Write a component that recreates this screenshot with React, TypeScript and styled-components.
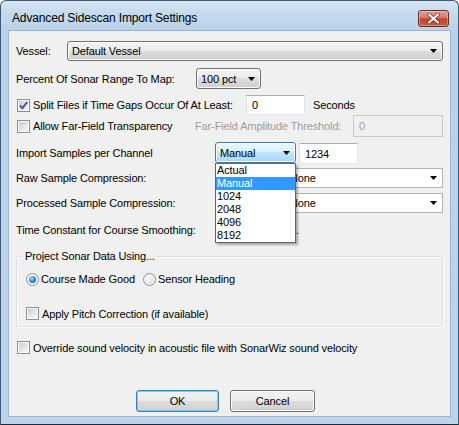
import styled, { createGlobalStyle, css } from 'styled-components'

const UI_FONT = `"Liberation Sans", Arial, sans-serif`

const GlobalStyle = createGlobalStyle`
  html, body {
    margin: 0;
    padding: 0;
    background: #ffffff;
  }
  * {
    box-sizing: border-box;
  }
`

const Window = styled.div`
  width: 459px;
  height: 425px;
  border: 1px solid #3f5873;
  border-bottom-color: #1d2b38;
  border-radius: 6px 6px 0 0;
  background: linear-gradient(180deg, #d6e5f4 0px, #c4d9ee 14px, #b9d1ea 30px, #bcd4ec 100%);
  padding: 0 7px 7px;
  display: flex;
  flex-direction: column;
  font-family: ${UI_FONT};
  font-size: 11px;
  letter-spacing: -0.13px;
  color: #000;
`

const TitleBar = styled.div`
  height: 29px;
  display: flex;
  align-items: flex-start;
  flex-shrink: 0;
`

const Title = styled.div`
  margin: 10px 0 0 4px;
  font-size: 12px;
  line-height: 15px;
  letter-spacing: -0.15px;
  white-space: nowrap;
`

const CloseButton = styled.div`
  margin: 9px 2px 0 auto;
  width: 31px;
  height: 17px;
  border: 1px solid #6b2a22;
  border-radius: 3px;
  background: linear-gradient(180deg, #e6a094 0%, #d4796a 45%, #c2432e 52%, #cb5a44 100%);
  box-shadow: inset 0 0 0 1px rgba(255, 255, 255, 0.3);
  display: flex;
  align-items: center;
  justify-content: center;
`

const Client = styled.div`
  flex: 1;
  background: #f0f0f0;
  border: 1px solid #9fb3cb;
  padding: 10px 7px 0;
  display: flex;
  flex-direction: column;
`

interface IRowProps {
  $top?: number
  $h: number
}

const Row = styled.div<IRowProps>`
  position: relative;
  display: flex;
  align-items: center;
  flex-shrink: 0;
  height: ${(p) => p.$h}px;
  margin-top: ${(p) => p.$top ?? 0}px;
`

interface ILabelProps {
  $w?: number
  $ml?: number
  $disabled?: boolean
}

const Label = styled.span<ILabelProps>`
  flex-shrink: 0;
  white-space: nowrap;
  width: ${(p) => (p.$w ? `${p.$w}px` : 'auto')};
  margin-left: ${(p) => p.$ml ?? 0}px;
  color: ${(p) => (p.$disabled ? '#9c9c9c' : '#000')};
`

const CheckBox = styled.span<{ $ml?: number }>`
  flex-shrink: 0;
  width: 13px;
  height: 13px;
  margin-left: ${(p) => p.$ml ?? 1}px;
  margin-right: 3px;
  border: 1px solid #8e8f8f;
  background: linear-gradient(135deg, #c2c6cc 0%, #e6e7e9 55%, #f8f8f8 100%);
  box-shadow: inset 0 0 0 1px #fbfbfb;
  display: inline-flex;
  align-items: center;
  justify-content: center;
`

const Radio = styled.span`
  flex-shrink: 0;
  width: 13px;
  height: 13px;
  margin-right: 2px;
  border-radius: 50%;
  border: 1px solid #8e8f8f;
  background: radial-gradient(circle at 35% 35%, #f8f8f8 0%, #e4e4e4 60%, #c9ccd1 100%);
  box-shadow: inset 0 0 0 1px #fbfbfb;
  display: inline-flex;
  align-items: center;
  justify-content: center;
`

const RadioDot = styled.span`
  width: 7px;
  height: 7px;
  border-radius: 50%;
  background: radial-gradient(circle at 40% 35%, #a9e2fc 0%, #3d8fd4 45%, #0f4f93 100%);
`

const RadioItem = styled.span<{ $w?: number }>`
  display: flex;
  align-items: center;
  width: ${(p) => (p.$w ? `${p.$w}px` : 'auto')};
  flex-shrink: 0;
  white-space: nowrap;
`

const comboVariants = {
  button: css`
    border: 1px solid #707070;
    border-radius: 3px;
    background: linear-gradient(180deg, #f2f2f2 0%, #ebebeb 50%, #dddddd 50%, #cfcfcf 100%);
    box-shadow: inset 0 0 0 1px #fbfbfb;
  `,
  focus: css`
    border: 1px solid #3c7fb1;
    border-radius: 3px;
    background: linear-gradient(180deg, #eaf6fd 0%, #d9f0fc 50%, #bee6fd 50%, #a7d9f5 100%);
    box-shadow: inset 0 0 0 1px #f4fbff;
  `,
  flat: css`
    border: 1px solid #b3b3b3;
    background: #ffffff;
  `,
}

interface IComboProps {
  $w: number
  $h: number
  $ml?: number
  $variant: keyof typeof comboVariants
}

const Combo = styled.div<IComboProps>`
  flex-shrink: 0;
  width: ${(p) => p.$w}px;
  height: ${(p) => p.$h}px;
  margin-left: ${(p) => p.$ml ?? 0}px;
  padding: 0 5px 0 4px;
  display: flex;
  align-items: center;
  justify-content: space-between;
  white-space: nowrap;
  align-self: flex-start;
  ${(p) => comboVariants[p.$variant]}
`

interface ITextBoxProps {
  $w: number
  $h: number
  $ml?: number
  $disabled?: boolean
}

const TextBox = styled.div<ITextBoxProps>`
  flex-shrink: 0;
  width: ${(p) => p.$w}px;
  height: ${(p) => p.$h}px;
  margin-left: ${(p) => p.$ml ?? 0}px;
  padding-left: 5px;
  display: flex;
  align-items: center;
  align-self: flex-end;
  border: 1px solid;
  border-color: ${(p) => (p.$disabled ? '#c5c8cc' : '#abadb3 #e2e3ea #e3e9ef #dbdfe6')};
  background: ${(p) => (p.$disabled ? '#f0f0f0' : '#ffffff')};
  color: ${(p) => (p.$disabled ? '#9c9c9c' : '#000')};
`

const DropList = styled.div`
  position: absolute;
  top: 21px;
  left: 199px;
  width: 81px;
  height: 80px;
  z-index: 10;
  border: 1px solid #646464;
  background: #ffffff;
  box-shadow: 2px 2px 2px rgba(0, 0, 0, 0.3);
  display: flex;
  flex-direction: column;
`

const DropItem = styled.div<{ $selected?: boolean }>`
  height: 13px;
  line-height: 13px;
  padding-left: 1px;
  background: ${(p) => (p.$selected ? '#3399ff' : 'transparent')};
  color: ${(p) => (p.$selected ? '#ffffff' : '#000')};
`

const Group = styled.div`
  position: relative;
  flex-shrink: 0;
  margin-top: 16px;
  height: 71px;
  border: 1px solid #d5dfe5;
  border-radius: 3px;
  box-shadow: 1px 1px 0 #ffffff, inset 1px 1px 0 #ffffff;
  padding-left: 9px;
  display: flex;
  flex-direction: column;
`

const Legend = styled.span`
  position: absolute;
  top: -7px;
  left: 6px;
  padding: 0 2px;
  line-height: 13px;
  background: #f0f0f0;
  white-space: nowrap;
`

const ButtonBar = styled.div`
  display: flex;
  flex-shrink: 0;
  margin-top: 36px;
  height: 22px;
`

const Button = styled.div<{ $w: number; $ml: number; $default?: boolean }>`
  width: ${(p) => p.$w}px;
  height: 22px;
  margin-left: ${(p) => p.$ml}px;
  border: 1px solid ${(p) => (p.$default ? '#3c7fb1' : '#707070')};
  border-radius: 3px;
  background: linear-gradient(180deg, #f2f2f2 0%, #ebebeb 50%, #dddddd 50%, #cfcfcf 100%);
  box-shadow: inset 0 0 0 1px ${(p) => (p.$default ? '#6fd3f7' : '#fbfbfb')};
  display: flex;
  align-items: center;
  justify-content: center;
`

const Arrow = () => (
  <svg width="7" height="4" viewBox="0 0 7 4">
    <polygon points="0,0 7,0 3.5,4" fill="#000" />
  </svg>
)

const Check = () => (
  <svg width="11" height="11" viewBox="0 0 11 11">
    <path d="M2 5.4 L4.4 8.2 L9.2 2.2" fill="none" stroke="#3b5a9c" strokeWidth="1.9" />
  </svg>
)

const CloseGlyph = () => (
  <svg width="13" height="11" viewBox="0 0 13 11">
    <path d="M2 1.5 L11 9.5 M11 1.5 L2 9.5" stroke="#6b2a22" strokeWidth="3.6" strokeLinecap="round" />
    <path d="M2 1.5 L11 9.5 M11 1.5 L2 9.5" stroke="#ffffff" strokeWidth="2.2" strokeLinecap="round" />
  </svg>
)

const sampleOptions = ['Actual', 'Manual', '1024', '2048', '4096', '8192']

function App() {
  return (
    <>
      <GlobalStyle />
      <Window>
        <TitleBar>
          <Title>Advanced Sidescan Import Settings</Title>
          <CloseButton>
            <CloseGlyph />
          </CloseButton>
        </TitleBar>
        <Client>
          <Row $h={20}>
            <Label $w={51}>Vessel:</Label>
            <Combo $variant="button" $w={376} $h={20}>
              Default Vessel
              <Arrow />
            </Combo>
          </Row>
          <Row $top={7} $h={21}>
            <Label $w={180}>Percent Of Sonar Range To Map:</Label>
            <Combo $variant="button" $w={65} $h={21}>
              100 pct
              <Arrow />
            </Combo>
          </Row>
          <Row $top={6} $h={20}>
            <CheckBox>
              <Check />
            </CheckBox>
            <Label $w={213}>Split Files if Time Gaps Occur Of At Least:</Label>
            <TextBox $w={59} $h={20}>0</TextBox>
            <Label $ml={8}>Seconds</Label>
          </Row>
          <Row $h={22}>
            <CheckBox />
            <Label $w={162}>Allow Far-Field Transparency</Label>
            <Label $w={158} $disabled>
              Far-Field Amplitude Threshold:
            </Label>
            <TextBox $w={90} $h={22} $disabled>
              0
            </TextBox>
          </Row>
          <Row $top={5} $h={22}>
            <Label $w={199}>Import Samples per Channel</Label>
            <Combo $variant="focus" $w={81} $h={21}>
              Manual
              <Arrow />
            </Combo>
            <TextBox $w={59} $h={21} $ml={3}>
              1234
            </TextBox>
            <DropList>
              {sampleOptions.map((opt) => (
                <DropItem key={opt} $selected={opt === 'Manual'}>
                  {opt}
                </DropItem>
              ))}
            </DropList>
          </Row>
          <Row $top={4} $h={20}>
            <Label $w={269}>Raw Sample Compression:</Label>
            <Combo $variant="flat" $w={158} $h={20}>
              None
              <Arrow />
            </Combo>
          </Row>
          <Row $top={5} $h={20}>
            <Label $w={269}>Processed Sample Compression:</Label>
            <Combo $variant="flat" $w={158} $h={20}>
              None
              <Arrow />
            </Combo>
          </Row>
          <Row $top={6} $h={21}>
            <Label $w={280}>Time Constant for Course Smoothing:</Label>
            <Label>.</Label>
          </Row>
          <Group>
            <Legend>Project Sonar Data Using...</Legend>
            <Row $top={15} $h={14}>
              <RadioItem $w={117}>
                <Radio>
                  <RadioDot />
                </Radio>
                Course Made Good
              </RadioItem>
              <RadioItem>
                <Radio />
                Sensor Heading
              </RadioItem>
            </Row>
            <Row $top={21} $h={13}>
              <CheckBox $ml={0} />
              <Label>Apply Pitch Correction (if available)</Label>
            </Row>
          </Group>
          <Row $top={14} $h={13}>
            <CheckBox />
            <Label>Override sound velocity in acoustic file with SonarWiz sound velocity</Label>
          </Row>
          <ButtonBar>
            <Button $default $w={83} $ml={120}>
              OK
            </Button>
            <Button $w={85} $ml={11}>
              Cancel
            </Button>
          </ButtonBar>
        </Client>
      </Window>
    </>
  )
}

export default App
